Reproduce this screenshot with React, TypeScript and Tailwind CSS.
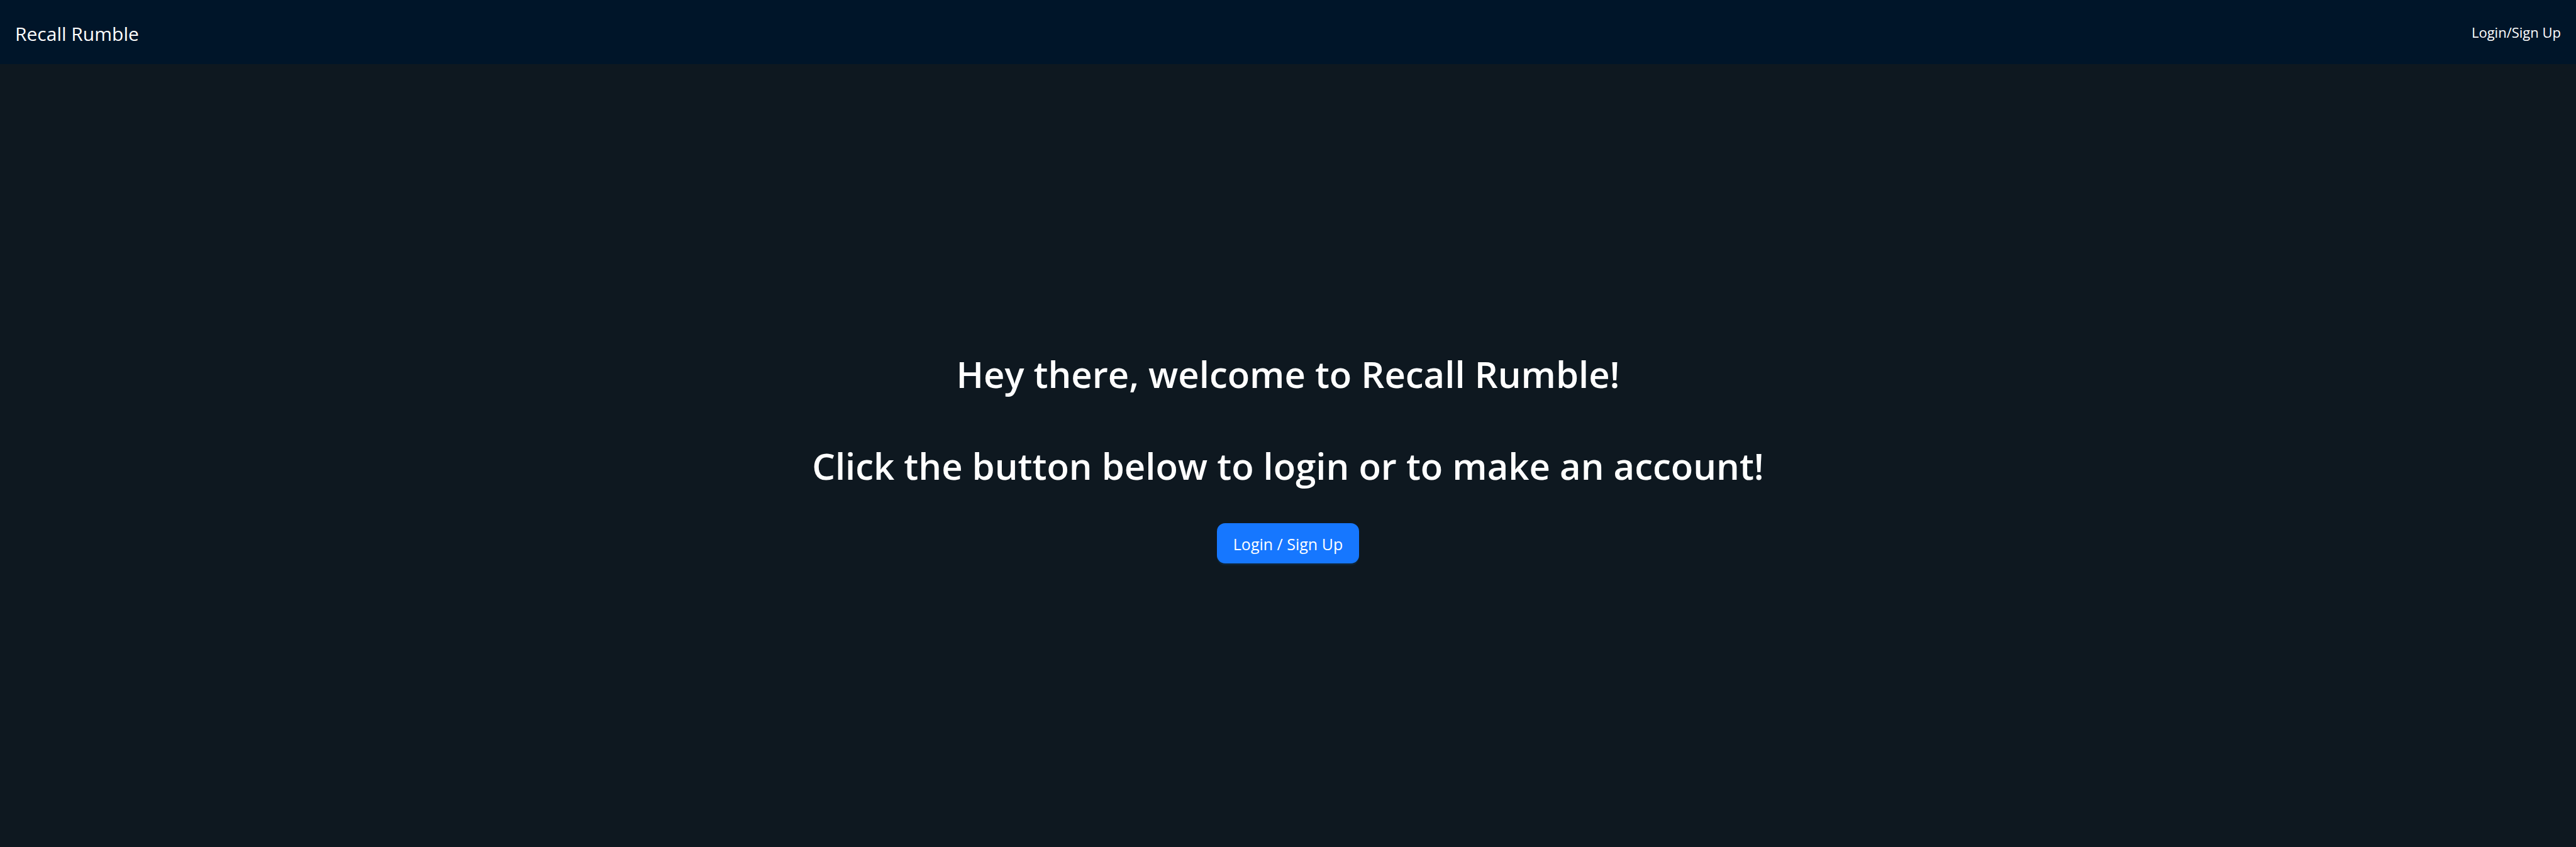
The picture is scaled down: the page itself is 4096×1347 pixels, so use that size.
export default function App() {
  return (
    <div className="flex min-h-screen flex-col bg-[#0e1820] font-['Open_Sans','Noto_Sans',sans-serif] text-white">
      <header className="flex h-[102px] items-center justify-between bg-[#001529] px-6">
        <a href="#" className="pt-1 text-[30px]">
          Recall Rumble
        </a>
        <nav>
          <a href="#login" className="text-[22px]">
            Login/Sign Up
          </a>
        </nav>
      </header>
      <main className="flex grow flex-col items-center justify-center pt-1 text-center">
        <h1 className="text-[58px] font-semibold leading-[74px]">Hey there, welcome to Recall Rumble!</h1>
        <h1 className="mt-[72px] text-[58px] font-semibold leading-[74px]">
          Click the button below to login or to make an account!
        </h1>
        <button
          type="button"
          className="mt-[54px] h-16 rounded-[13px] bg-[#1677ff] px-[26px] pt-1 text-[25px] shadow-[0_3px_0_rgba(5,145,255,0.1)]"
        >
          Login / Sign Up
        </button>
      </main>
    </div>
  );
}
